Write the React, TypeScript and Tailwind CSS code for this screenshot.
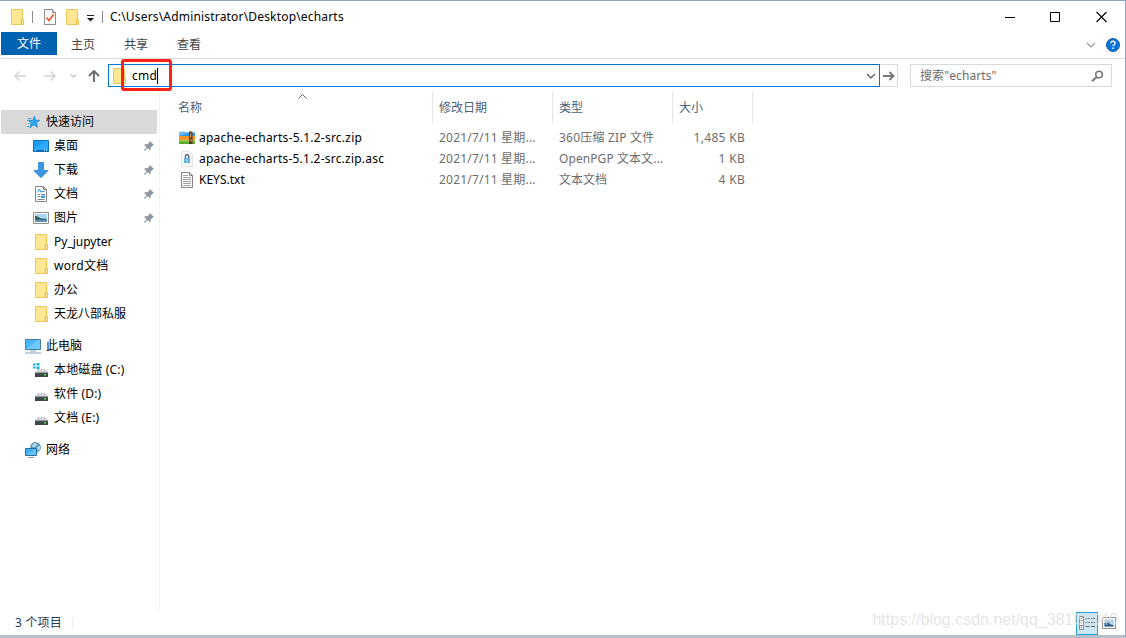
import type { ReactNode } from 'react'
import clsx from 'clsx'

type NavItem = {
  label: string
  icon: ReactNode
  root?: boolean
  pinned?: boolean
  selected?: boolean
  tracking?: string
}

type FileRow = {
  name: string
  icon: ReactNode
  date: string
  type: string
  size: string
  nameTracking?: string
  typeTracking?: string
}

const FolderIcon = () => (
  <svg width="16" height="18" viewBox="0 0 16 18" className="shrink-0">
    <path d="M2.500 1.500h11v10h1v5h-12z" fill="#ffe794" stroke="#eac75c" />
    <path d="M12.500 16.500v-5h1" fill="none" stroke="#e5bb45" />
  </svg>
)

const StarIcon = () => (
  <svg width="16" height="16" viewBox="0 0 16 16" className="shrink-0">
    <path d="M9.300 2.300l1.100 4h4.400l-3.500 2.500 1.200 4.500-3.700-2.600-3.900 2.900 1.500-4.700-3-2.500h4.400z" fill="#2ba7ee" stroke="#1b86cd" strokeWidth=".8" />
    <path d="M3 4.500h3.500M2 6.500h2M3 9.500h2M1.500 12.500h3" stroke="#3aa5e4" strokeWidth=".8" />
  </svg>
)

const DesktopIcon = () => (
  <svg width="16" height="16" viewBox="0 0 16 16" className="shrink-0">
    <path d="M.5 2.500h15v11h-15z" fill="#1f9dfb" stroke="#0c72c4" />
    <path d="M1 11L12 3h3v9H1z" fill="#32aaff" />
    <path d="M1 12.500h14" stroke="#0b5fa8" />
    <path d="M2 12.500h1M11 12.500h1M13 12.500h1" stroke="#fff" />
  </svg>
)

const DownloadIcon = () => (
  <svg width="16" height="16" viewBox="0 0 16 16" className="shrink-0">
    <path d="M5.500.500h5v8h4.700L8 15.700.800 8.500h4.700z" fill="#3b97e6" stroke="#2b7fcd" strokeWidth=".8" />
  </svg>
)

const DocumentIcon = () => (
  <svg width="16" height="16" viewBox="0 0 16 16" className="shrink-0">
    <path d="M2.500.500h8l3 3v12h-11z" fill="#fff" stroke="#858585" />
    <path d="M10.500.500v3h3" fill="none" stroke="#858585" />
    <path d="M4.500 6.500L6.500 3l1.500 3.500M8.500 5.500h3" fill="none" stroke="#2387d4" />
    <path d="M4.500 8.500h3M8.500 8.500h3.500M4.500 10.500h3M4.500 13.500h7" stroke="#71869b" />
    <path d="M8 9.500h4v2.500H8z" fill="#3ca0e8" />
  </svg>
)

const PictureIcon = () => (
  <svg width="16" height="16" viewBox="0 0 16 16" className="shrink-0">
    <path d="M.5 2.500h15v11h-15z" fill="#fff" stroke="#8e8e8e" />
    <path d="M2 4h12v8H2z" fill="#a9d3f5" />
    <path d="M2 6c3 0 4 2 7 2.500l5 .5v1H2z" fill="#2e5d50" />
    <path d="M2 9.700h12V12H2z" fill="#5d93c2" />
  </svg>
)

const ComputerIcon = () => (
  <svg width="16" height="16" viewBox="0 0 16 16" className="shrink-0">
    <path d="M.5 1.500h15v10h-15z" fill="#4ab5fb" stroke="#3f7fa9" />
    <path d="M1 11L12 2h3v9z" fill="#6cc8ff" />
    <path d="M5 13h6M0 15h16" stroke="#8aa3b3" />
  </svg>
)

const DriveIcon = ({ system = false }: { system?: boolean }) => (
  <svg width="16" height="16" viewBox="0 0 16 16" className="shrink-0">
    <path d="M4.500 7h8l2.500 3.500H2z" fill="#d2d4d6" />
    <path d="M2 10.500h13V15H2z" fill="#3f4447" />
    <path d="M2 10.700h13" stroke="#9a9da0" strokeWidth=".7" />
    <path d="M11 12.700h2" stroke="#35ee4b" strokeWidth="1.500" />
    {system ? (
      <>
        <path d="M0 0h7v7H0z" fill="#fff" />
        <path d="M0 1.500h2.500v2H0zM3.500 1h3v2.500h-3zM0 4.500h2.500v2H0zM3.500 4.500h3V7h-3z" fill="#14b1e7" />
      </>
    ) : null}
  </svg>
)

const NetworkIcon = () => (
  <svg width="16" height="16" viewBox="0 0 16 16" className="shrink-0">
    <circle cx="10.500" cy="5.500" r="5" fill="#5f9dbd" stroke="#44758f" strokeWidth=".6" />
    <path d="M8 2l3-1 1 2-2 2-3 0zM12 5l3-1 0 3-2 2z" fill="#b9dcec" />
    <path d="M.5 6.500h11v7H.5z" fill="#41aef5" stroke="#2a6f9c" />
    <path d="M1 13l9-6h1v6z" fill="#66c3fc" />
    <path d="M3 15.500h6" stroke="#8aa3b3" />
  </svg>
)

const PinIcon = () => (
  <svg width="12" height="12" viewBox="0 0 12 12" className="shrink-0">
    <path d="M7 1l4 4-1.300.400-2 2 .100 2.200-1 .700L4.600 8.300 1.300 11l-.600-.500 2.800-3.200L1.300 5l.900-.900 2.300.200 2-2z" fill="#8c98a3" />
  </svg>
)

const ArchiveIcon = () => (
  <svg width="16" height="16" viewBox="0 0 16 16" className="shrink-0">
    <path d="M0 2.500l5-1 1 1h10V7H0z" fill="#2f9be8" />
    <path d="M0 2.500l5-1 1 1h4L0 6z" fill="#67bff7" />
    <path d="M0 6h16v4.500H0z" fill="#f79423" />
    <path d="M0 10.500h16V14H0z" fill="#5eaa2c" />
    <path d="M0 10.500h16v1H0z" fill="#9bd04d" />
    <path d="M10 1.500h3.500V14H10z" fill="#633422" />
    <path d="M11.200 3h1v5h-1z" fill="#d5a463" />
    <path d="M10.500 9.500h2.500v2h-2.500z" fill="#a67b50" />
  </svg>
)

const SignatureIcon = () => (
  <svg width="16" height="16" viewBox="0 0 16 16" className="shrink-0">
    <path d="M2.500.500h8l3 3v12h-11z" fill="#f6f6f6" stroke="#e3e3e3" />
    <path d="M6.500 7.500V5.300a1.600 1.600 0 0 1 3.200 0v2.200" fill="none" stroke="#4c5963" strokeWidth="1.200" />
    <path d="M5 7h6v5H5z" fill="#62b3e4" />
    <path d="M7.500 8.500h1v2h-1z" fill="#e9f5fc" />
  </svg>
)

const TextFileIcon = () => (
  <svg width="16" height="16" viewBox="0 0 16 16" className="shrink-0">
    <path d="M2.500.500h8l3 3v12h-11z" fill="#fff" stroke="#858585" />
    <path d="M10.500.500v3h3" fill="none" stroke="#858585" />
    <path d="M4 3.500h5M4 5.500h8M4 7.500h8M4 9.500h8M4 11.500h8M4 13.500h8" stroke="#a2a2a2" />
  </svg>
)

const navGroups: NavItem[][] = [
  [
    { label: '快速访问', icon: <StarIcon />, root: true, selected: true },
    { label: '桌面', icon: <DesktopIcon />, pinned: true },
    { label: '下载', icon: <DownloadIcon />, pinned: true },
    { label: '文档', icon: <DocumentIcon />, pinned: true },
    { label: '图片', icon: <PictureIcon />, pinned: true },
    { label: 'Py_jupyter', icon: <FolderIcon /> },
    { label: 'word文档', icon: <FolderIcon />, tracking: 'tracking-[0.3px]' },
    { label: '办公', icon: <FolderIcon /> },
    { label: '天龙八部私服', icon: <FolderIcon /> }
  ],
  [
    { label: '此电脑', icon: <ComputerIcon />, root: true },
    { label: '本地磁盘 (C:)', icon: <DriveIcon system />, tracking: 'tracking-[0.15px]' },
    { label: '软件 (D:)', icon: <DriveIcon />, tracking: 'tracking-[0.15px]' },
    { label: '文档 (E:)', icon: <DriveIcon />, tracking: 'tracking-[0.15px]' }
  ],
  [{ label: '网络', icon: <NetworkIcon />, root: true }]
]

const files: FileRow[] = [
  {
    name: 'apache-echarts-5.1.2-src.zip',
    icon: <ArchiveIcon />,
    date: '2021/7/11 星期...',
    type: '360压缩 ZIP 文件',
    size: '1,485 KB',
    nameTracking: 'tracking-[0.23px]',
    typeTracking: 'tracking-[0.2px]'
  },
  {
    name: 'apache-echarts-5.1.2-src.zip.asc',
    icon: <SignatureIcon />,
    date: '2021/7/11 星期...',
    type: 'OpenPGP 文本文...',
    size: '1 KB',
    nameTracking: 'tracking-[0.22px]',
    typeTracking: 'tracking-[0.08px]'
  },
  { name: 'KEYS.txt', icon: <TextFileIcon />, date: '2021/7/11 星期...', type: '文本文档', size: '4 KB' }
]

const TitleBar = () => (
  <header className="flex h-[31px] shrink-0 items-center">
    <div className="flex w-[109px] shrink-0 items-center pl-2">
      <FolderIcon />
      <span className="ml-[7px] h-3 w-px bg-[#8b8b8b]" />
      <svg width="14" height="16" viewBox="0 0 14 16" className="ml-[10px] shrink-0">
        <path d="M1.500.500h8l3 3v12h-11z" fill="#f7f9fc" stroke="#8b8b8b" />
        <path d="M9.500.500v3h3" fill="#ddd" stroke="#8b8b8b" />
        <path d="M3.500 8.500l2.500 3 4.500-6" fill="none" stroke="#ee562a" strokeWidth="1.700" />
      </svg>
      <span className="ml-[7px]">
        <FolderIcon />
      </span>
      <svg width="9" height="8" viewBox="0 0 9 8" className="ml-[6px] mt-1 shrink-0">
        <path d="M1 .500h7" stroke="#222" />
        <path d="M1 3h7L4.500 6.500z" fill="#111" />
      </svg>
      <span className="ml-[7px] h-3 w-px shrink-0 bg-[#8b8b8b]" />
    </div>
    <span className="tracking-[0.18px] text-black">C:\Users\Administrator\Desktop\echarts</span>
    <svg width="102" height="12" viewBox="0 0 102 12" className="ml-auto mr-[18px] shrink-0" fill="none" stroke="#000">
      <path d="M0 6.500h10M45.500 1.500h9v9h-9z" />
      <path d="M91.500 1l10 10M101.500 1l-10 10" strokeWidth="1.100" />
    </svg>
  </header>
)

const RibbonTabs = () => (
  <nav className="flex h-[27px] shrink-0 border-b border-[#dadbdc] text-[#444]">
    <span className="flex h-[23px] w-14 items-center justify-center bg-[#0063b1] text-white">文件</span>
    <span className="ml-[14px] flex h-[25px] items-center">主页</span>
    <span className="ml-[29px] flex h-[25px] items-center">共享</span>
    <span className="ml-[29px] flex h-[25px] items-center">查看</span>
    <span className="ml-auto mr-[5px] flex h-[26px] items-center gap-[10px]">
      <svg width="10" height="6" viewBox="0 0 10 6" fill="none" stroke="#999" strokeWidth="1.200">
        <path d="M1 1l4 4 4-4" />
      </svg>
      <svg width="14" height="14" viewBox="0 0 14 14">
        <circle cx="7" cy="7" r="6.500" fill="#0a74d2" stroke="#0861b0" />
        <path d="M4.900 5.200c0-2.700 4.200-2.600 4.200 0 0 1.500-2.100 1.500-2.100 3M7 9.500v1.500" fill="none" stroke="#fff" strokeWidth="1.400" />
      </svg>
    </span>
  </nav>
)

const AddressBar = () => (
  <div className="flex h-[33px] shrink-0 items-center">
    <svg width="107" height="16" viewBox="0 0 107 16" className="shrink-0" fill="none">
      <path d="M25 8H14M18.500 3.500L14 8l4.500 4.500M43 8h11M49.500 3.500L54 8l-4.500 4.500" stroke="#d4d4d4" strokeWidth="1.600" />
      <path d="M70 6.500L72.500 9 75 6.500" stroke="#c4c4c4" strokeWidth="1.300" />
      <path d="M93 14V3M88 8l5-5 5 5" stroke="#6a6a6a" strokeWidth="1.900" />
    </svg>
    <div className="relative flex h-[23px] w-[772px] shrink-0 items-center border border-[#0078d7] pl-[2px]">
      <FolderIcon />
      <span className="ml-[5px] tracking-[0.3px] text-black">cmd</span>
      <span className="h-4 w-px bg-black" />
      <svg width="10" height="6" viewBox="0 0 10 6" className="ml-auto mr-[3px]" fill="none" stroke="#555" strokeWidth="1.200">
        <path d="M1 1l4 4 4-4" />
      </svg>
      <div className="absolute -top-[6px] left-[12px] h-8 w-[51px] rounded-[3px] border-[3px] border-[#fb2116]" />
    </div>
    <div className="flex h-[23px] w-[18px] shrink-0 items-center justify-center border border-l-0 border-[#d9d9d9]">
      <svg width="12" height="10" viewBox="0 0 12 10" fill="none" stroke="#777" strokeWidth="1.900">
        <path d="M0 5h10.500M6.500 1l4 4-4 4" />
      </svg>
    </div>
    <div className="ml-3 flex h-[23px] w-[202px] items-center justify-between border border-[#d9d9d9] pl-[9px] pr-[7px] text-[#6d6d6d]">
      <span className="tracking-[0.1px]">搜索"echarts"</span>
      <svg width="13" height="12" viewBox="0 0 13 12" fill="none" stroke="#777" strokeWidth="1.600">
        <circle cx="8" cy="4.500" r="3.300" />
        <path d="M5.600 6.900L1 11.200" strokeWidth="2" />
      </svg>
    </div>
  </div>
)

const NavRow = ({ item }: { item: NavItem }) => (
  <li
    className={clsx(
      'flex h-6 items-center pr-[2px] text-black',
      item.root ? 'pl-6' : 'pl-8',
      item.selected && 'bg-[#d9d9d9]'
    )}
  >
    {item.icon}
    <span className={clsx('ml-[5px] whitespace-nowrap', item.tracking)}>{item.label}</span>
    {item.pinned ? (
      <span className="ml-auto">
        <PinIcon />
      </span>
    ) : null}
  </li>
)

const NavPane = () => (
  <aside className="flex w-[159px] shrink-0 flex-col gap-2 border-r border-[#f2f2f2] pr-[2px] pt-[18px]">
    {navGroups.map((group, index) => (
      <ul key={index}>
        {group.map((item) => (
          <NavRow key={item.label} item={item} />
        ))}
      </ul>
    ))}
  </aside>
)

const FileList = () => (
  <main className="min-w-0 flex-1">
    <div className="relative flex h-[31px] items-center text-[#4c607a]">
      <span className="flex h-full w-[273px] items-center border-r border-[#e5e5e5] pl-[18px]">名称</span>
      <span className="flex h-full w-[120px] items-center border-r border-[#e5e5e5] pl-[6px]">修改日期</span>
      <span className="flex h-full w-[120px] items-center border-r border-[#e5e5e5] pl-[6px]">类型</span>
      <span className="flex h-full w-[80px] items-center border-r border-[#e5e5e5] pl-[6px]">大小</span>
      <svg width="9" height="5" viewBox="0 0 9 5" className="absolute left-[138px] top-[2px]" fill="none" stroke="#666">
        <path d="M.5 4.500l4-4 4 4" />
      </svg>
    </div>
    <div className="pt-1">
      {files.map((file) => (
        <div key={file.name} className="flex h-[21px] items-center whitespace-nowrap text-[#6d6d6d]">
          <span className="flex w-[273px] items-center gap-1 pl-[19px] text-black">
            {file.icon}
            <span className={file.nameTracking}>{file.name}</span>
          </span>
          <span className="w-[120px] pl-[6px] tracking-[0.2px]">{file.date}</span>
          <span className={clsx('w-[120px] pl-[6px]', file.typeTracking)}>{file.type}</span>
          <span className="w-[72px] text-right tracking-[0.3px]">{file.size}</span>
        </div>
      ))}
    </div>
  </main>
)

const StatusBar = () => (
  <footer className="relative flex h-6 shrink-0 items-center text-[#1e395b]">
    <span className="ml-[14px] tracking-[0.2px]">3 个项目</span>
    <span className="ml-[10px] h-[11px] w-px bg-[#ececec]" />
    <span className="ml-auto flex h-[23px] w-[22px] items-center justify-center border border-[#26a0da] bg-[#cbe8f6]">
      <svg width="18" height="14" viewBox="0 0 18 14" fill="none">
        <path d="M1.500.500h4v13h-4zM1.500 4.500h4M1.500 9.500h4" fill="#fff" stroke="#8a8a8a" />
        <path d="M3 2.500h1" stroke="#555" />
        <path d="M3 7h1" stroke="#2787cf" />
        <path d="M3 11.500h1" stroke="#d23b30" strokeWidth="1.500" />
        <path d="M7.500 2.500h4M13 2.500h4M7.500 6.500h4M13 6.500h4M7.500 10.500h4M13 10.500h4" stroke="#666" />
      </svg>
    </span>
    <svg width="14" height="12" viewBox="0 0 14 12" className="ml-1 mr-[9px]">
      <path d="M.5.500h13v11H.5z" fill="#fff" stroke="#8e8e8e" />
      <path d="M2.500 2.500h9v7h-9z" fill="#9ccaf3" />
      <path d="M2.500 6l3-1 3 2.500h3v2h-9z" fill="#285c8e" />
    </svg>
    <span className="absolute right-[7px] top-0 whitespace-nowrap font-['Liberation_Sans'] text-[16px] leading-[18px] text-[#dedede]/80">
      https://blog.csdn.net/qq_38161040
    </span>
  </footer>
)

const App = () => (
  <div className="flex h-[638px] w-[1126px] flex-col overflow-hidden border-b-[3px] border-r border-t border-b-[#b5c0cb] border-r-[#93a8cc] border-t-[#8fa5c5] bg-white pl-px font-['Noto_Sans','Noto_Sans_CJK_SC',sans-serif] text-[12px] leading-[18px]">
    <TitleBar />
    <RibbonTabs />
    <AddressBar />
    <div className="flex min-h-0 flex-1">
      <NavPane />
      <FileList />
    </div>
    <StatusBar />
  </div>
)

export default App
